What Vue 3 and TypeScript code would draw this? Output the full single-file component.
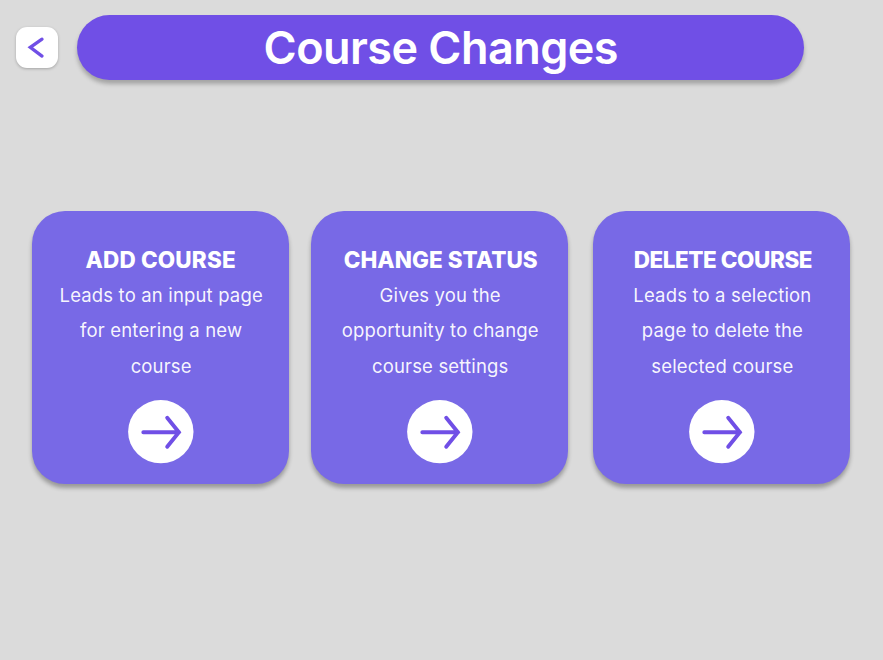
<script setup lang="ts">
interface CourseAction {
  id: string
  title: string
  lines: string[]
}

const actions: CourseAction[] = [
  { id: 'add', title: 'ADD COURSE', lines: ['Leads to an input page', 'for entering a new', 'course'] },
  { id: 'status', title: 'CHANGE STATUS', lines: ['Gives you the', 'opportunity to change', 'course settings'] },
  { id: 'delete', title: 'DELETE COURSE', lines: ['Leads to a selection', 'page to delete the', 'selected course'] },
]
</script>

<template>
  <main class="page">
    <header class="header">
      <button class="back" type="button" aria-label="Back">
        <svg width="42" height="41" viewBox="0 0 42 41" fill="none">
          <path d="M26 12.2 L14.3 20.3 L26 29.1" stroke="#704fe6" stroke-width="3.3" stroke-linecap="round" />
        </svg>
      </button>
      <h1 class="title">Course Changes</h1>
    </header>
    <section class="cards">
      <article v-for="action in actions" :key="action.id" class="card" :class="action.id">
        <h2 class="card-title">{{ action.title }}</h2>
        <p class="card-text">
          <span v-for="line in action.lines" :key="line" class="line">{{ line }}</span>
        </p>
        <button class="go" type="button" :aria-label="action.title">
          <svg width="66" height="64" viewBox="0 0 66 64" fill="none">
            <ellipse cx="32.8" cy="31.7" rx="32.7" ry="31.6" fill="#fff" />
            <path d="M15.3 32.2 H51 M39.2 17.7 L50.9 32.2 L39.2 46.7" stroke="#704fe6" stroke-width="3.9" stroke-linecap="round" />
          </svg>
        </button>
      </article>
    </section>
  </main>
</template>

<style>
body {
  background: #dbdbdb;
}
</style>

<style scoped>
.page {
  box-sizing: border-box;
  width: 883px;
  height: 660px;
  padding-top: 15px;
  overflow: hidden;
  background: #dbdbdb;
  font-family: Inter, "Liberation Sans", sans-serif;
  color: #fff;
}
.header {
  display: flex;
  align-items: center;
  gap: 18.7px;
  height: 65px;
  padding-left: 16.4px;
}
.back {
  display: block;
  width: 42px;
  height: 41px;
  padding: 0;
  border: 0;
  border-radius: 11px;
  background: #fff;
  box-shadow: 0 1px 3px rgba(0, 0, 0, 0.25);
}
.back svg,
.go svg {
  display: block;
}
.title {
  width: 727.4px;
  height: 65px;
  margin: 0;
  border-radius: 32.5px;
  background: #704fe6;
  box-shadow: 0 4px 4px rgba(0, 0, 0, 0.25);
  font-size: 45px;
  font-weight: 600;
  line-height: 66px;
  letter-spacing: -0.56px;
  text-align: center;
}
.cards {
  display: flex;
  padding: 131px 0 0 31.7px;
}
.card {
  box-sizing: border-box;
  display: flex;
  flex-direction: column;
  align-items: center;
  width: 257px;
  height: 273px;
  padding: 33px 0 0 1px;
  border-radius: 33px;
  background: #7869e6;
  box-shadow: 0 4px 4px rgba(0, 0, 0, 0.3);
}
.status {
  margin-left: 22px;
}
.delete {
  margin-left: 25.2px;
}
.card-title {
  margin: 0;
  font-size: 22.5px;
  font-weight: 800;
  line-height: 32px;
  letter-spacing: 0.15px;
  white-space: nowrap;
}
.status .card-title {
  padding-left: 2px;
  letter-spacing: 0.05px;
}
.delete .card-title {
  padding-left: 2px;
  letter-spacing: -0.45px;
}
.card-text {
  margin: 1.6px 0 0 1px;
  color: rgba(255, 255, 255, 0.95);
  font-size: 18.5px;
  font-weight: 400;
  line-height: 35.5px;
  letter-spacing: 0.16px;
  text-align: center;
}
.line {
  display: block;
  white-space: nowrap;
}
.go {
  margin-top: 15.9px;
  padding: 0;
  border: 0;
  background: none;
}
</style>
